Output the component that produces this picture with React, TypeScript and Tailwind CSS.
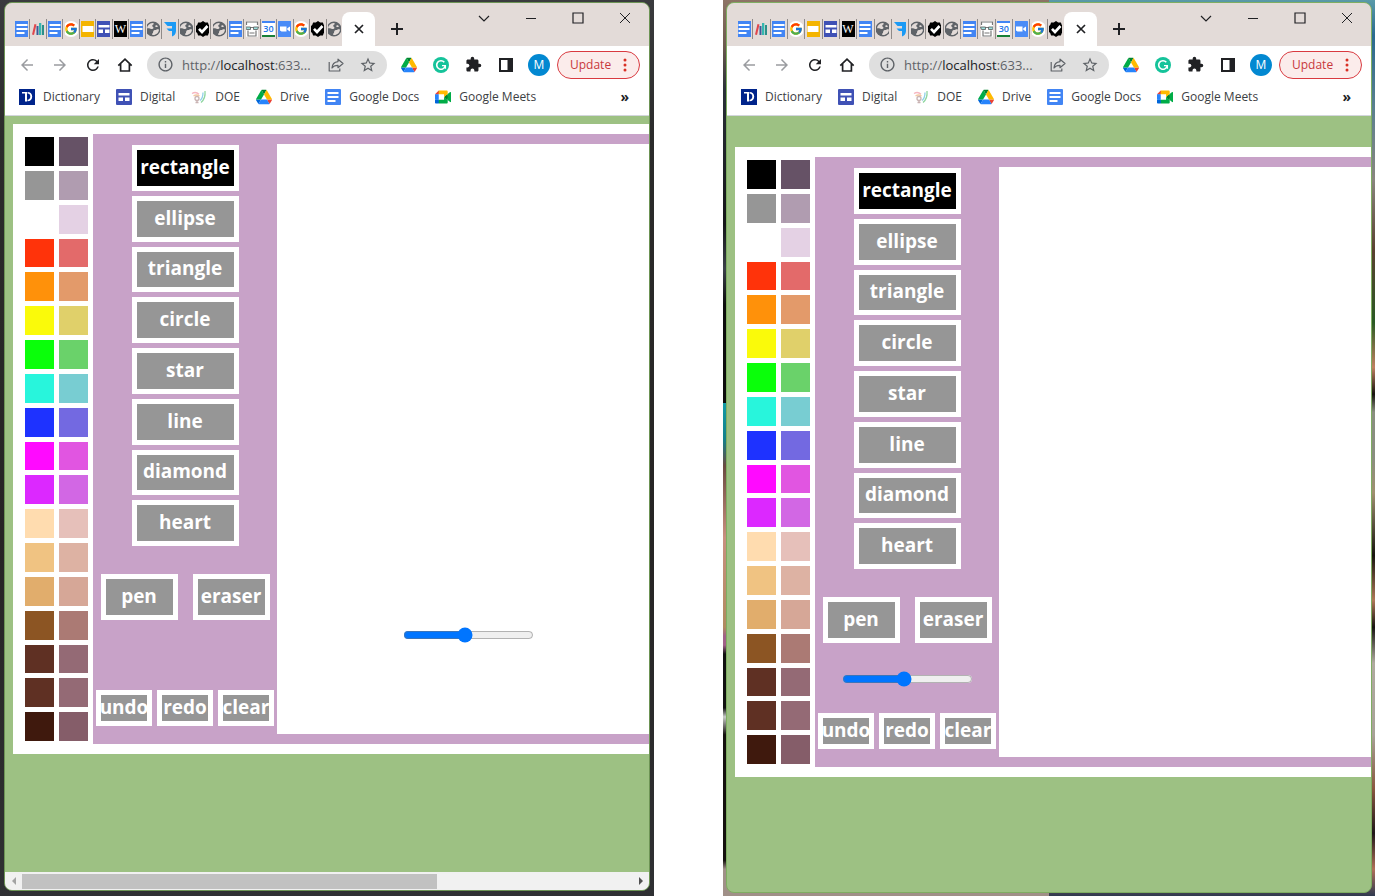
import type { ReactNode } from "react";
import { FcGoogle } from "react-icons/fc";
import {
  MdArrowBack,
  MdArrowForward,
  MdExtension,
  MdInfoOutline,
  MdRefresh,
  MdStarBorder,
} from "react-icons/md";

/* ---------- site icons ---------- */

const DocsIcon = () => (
  <svg viewBox="0 0 16 16" className="size-4 shrink-0" aria-hidden="true">
    <rect width="16" height="16" rx="1" fill="#4285f4" />
    <path d="M2.5 3h11v2h-11zM2.5 7h11v2h-11zM2.5 11h8v2h-8z" fill="#fff" />
  </svg>
);

const BooksIcon = () => (
  <svg viewBox="0 0 16 16" className="size-4 shrink-0" aria-hidden="true">
    <path d="M2 13.500 4.500 3l2 .5L4 14z" fill="#e0474c" />
    <path d="M6.500 5h2v9h-2z" fill="#3d5a98" />
    <path d="M9 2h2.300v12H9z" fill="#35b8b0" />
    <path d="M12 4h2v10h-2z" fill="#2b8f8a" />
  </svg>
);

const GoogleIcon = () => (
  <span className="flex size-4 shrink-0 items-center justify-center rounded-full bg-white">
    <FcGoogle className="size-3.5" />
  </span>
);

const SlidesIcon = () => (
  <svg viewBox="0 0 16 16" className="size-4 shrink-0" aria-hidden="true">
    <rect width="16" height="16" rx="1" fill="#f4b400" />
    <path d="M2.500 5h11v6h-11z" fill="#fff" />
  </svg>
);

const SitesIcon = () => (
  <svg viewBox="0 0 16 16" className="size-4 shrink-0" aria-hidden="true">
    <rect width="16" height="16" rx="1" fill="#3f51b5" />
    <path d="M2.500 4h11v2.500h-11zM2.500 8.500H7V12H2.500zM9 8.500h4.500V12H9z" fill="#fff" />
  </svg>
);

const WIcon = () => (
  <span className="flex size-4 shrink-0 items-center justify-center bg-black font-['Liberation_Serif',serif] text-xs leading-4 text-white">
    W
  </span>
);

const GlobeIcon = () => (
  <svg viewBox="0 0 16 16" className="size-4 shrink-0" aria-hidden="true">
    <circle cx="8" cy="8" r="7.500" fill="#5f6368" />
    <path
      d="M2 7.200C2.300 4.500 4.500 2.200 7.500 2c1.500 0 1.700 1 .8 1.600-1.500.7-1.200 1.900-.3 2.400 1 .7.400 1.900-.9 2.100-1.300.1-2-.8-3-.9-.8 0-1.300.2-2.100 0z"
      fill="#e3dbd8"
    />
    <path
      d="M14 8.800c-.3 2.900-2.700 5.200-5.800 5.300-1.200-.2-1.400-1.100-.6-1.900.9-.8.200-1.500.9-2.500.8-.9 1.900-.5 2.800-1 .9-.4 1.700-.7 2.700.1zM10.500 4.500c.9-.7 1.900 0 2.400.9-.7.8-2 .8-2.600.3z"
      fill="#e3dbd8"
    />
  </svg>
);

const FlagIcon = () => (
  <svg viewBox="0 0 16 16" className="size-4 shrink-0" aria-hidden="true">
    <path d="M2 1h12v9c0 3-2 5-4 5.500V10H7L4.500 7.500H10V5H5.500z" fill="#1a9af5" />
  </svg>
);

const CheckIcon = () => (
  <svg viewBox="0 0 16 16" className="size-4 shrink-0" aria-hidden="true">
    <path
      d="M8 0l2.200 1.500 2.700.1.900 2.500L16 5.800 15.200 8l.8 2.200-2.200 1.700-.9 2.500-2.700.1L8 16l-2.200-1.500-2.700-.1-.9-2.500L0 10.200.8 8 0 5.800l2.200-1.700.9-2.500 2.700-.1z"
      fill="#000"
    />
    <path d="M4 7.800 7 11l5.500-6" fill="none" stroke="#fff" strokeWidth="2.600" />
  </svg>
);

const GlassesIcon = () => (
  <svg viewBox="0 0 16 16" className="size-4 shrink-0" aria-hidden="true">
    <rect x="2" y="0" width="12" height="16" rx="1" fill="#fff" />
    <path d="M2.500 4V1h11v3M4 9.500V15h8V9.500M5.500 12h5" fill="none" stroke="#777" strokeWidth="1.200" />
    <path d="M1.500 6h5v2.500h-4zM9.500 6h5l-1 2.500h-4zM6.500 6.500h3" fill="#9de0dc" stroke="#555" strokeWidth="0.800" />
  </svg>
);

const CalendarIcon = () => (
  <span className="flex size-4 shrink-0 items-center justify-center border-b-2 border-t-2 border-b-[#188038] border-t-[#4285f4] bg-white font-['Open_Sans',sans-serif] text-[9px] font-semibold leading-3 text-[#1a73e8]">
    30
  </span>
);

const VideoIcon = () => (
  <svg viewBox="0 0 16 16" className="size-4 shrink-0" aria-hidden="true">
    <rect width="16" height="16" rx="2" fill="#4a8cf7" />
    <path d="M3 5.500h6.500v5H4.500L3 9.500zM10.300 7.200 13 5.500v5l-2.700-1.700z" fill="#fff" />
  </svg>
);

const DriveIcon = () => (
  <svg viewBox="0 0 87.3 78" className="size-4 shrink-0" aria-hidden="true">
    <path d="m6.600 66.850 3.850 6.650c.8 1.400 1.950 2.500 3.300 3.300l13.750-23.800h-27.500c0 1.550.4 3.100 1.200 4.500z" fill="#0066da" />
    <path d="m43.650 25-13.750-23.800c-1.350.8-2.500 1.900-3.300 3.300l-25.400 44a9.060 9.060 0 0 0-1.200 4.500h27.500z" fill="#00ac47" />
    <path d="m73.550 76.800c1.350-.8 2.500-1.900 3.300-3.300l1.600-2.750 7.650-13.250c.8-1.400 1.200-2.950 1.200-4.500h-27.502l5.852 11.500z" fill="#ea4335" />
    <path d="m43.650 25 13.750-23.800c-1.350-.8-2.900-1.200-4.500-1.200h-18.500c-1.600 0-3.150.45-4.500 1.200z" fill="#00832d" />
    <path d="m59.800 53h-32.300l-13.750 23.800c1.350.8 2.900 1.200 4.500 1.200h50.800c1.600 0 3.150-.45 4.500-1.200z" fill="#2684fc" />
    <path d="m73.400 26.500-12.700-22c-.8-1.400-1.950-2.500-3.300-3.300l-13.750 23.800 16.150 28h27.450c0-1.550-.4-3.100-1.200-4.500z" fill="#ffba00" />
  </svg>
);

const MeetIcon = () => (
  <svg viewBox="0 0 87.5 72" className="size-4 shrink-0" aria-hidden="true">
    <path fill="#fff" d="M20 20h30v32H20z" />
    <path fill="#00832d" d="M49.500 36l8.530 9.750 11.470 7.330 2-17.020-2-16.640-11.690 6.440z" />
    <path fill="#0066da" d="M0 51.500V66c0 3.315 2.685 6 6 6h14.500l3-10.960-3-9.540-9.950-3z" />
    <path fill="#e94235" d="M20.500 0L0 20.500l10.550 3 9.950-3 2.950-9.410z" />
    <path fill="#2684fc" d="M20.500 20.500H0v31h20.500z" />
    <path
      fill="#00ac47"
      d="M82.600 8.680L69.500 19.420v33.660l13.160 10.790c1.970 1.540 4.850.135 4.850-2.370V11c0-2.535-2.945-3.925-4.910-2.320zM49.500 36v15.500h-29V72h43c3.315 0 6-2.685 6-6V53.080z"
    />
    <path fill="#ffba00" d="M63.500 0h-43v20.500h29V36l20-16.570V6c0-3.315-2.685-6-6-6z" />
  </svg>
);

const DictionaryIcon = () => (
  <svg viewBox="0 0 16 16" className="size-4 shrink-0" aria-hidden="true">
    <rect width="16" height="16" fill="#00248b" />
    <path d="M3 3h5v9.500H6V4.500H3z" fill="#fff" />
    <path
      d="M8.500 3c3 0 4.700 1.700 4.700 4.600 0 3-1.800 4.700-4.700 4.700v-1.600c1.800 0 2.800-1.100 2.800-3.100S10.300 4.600 8.500 4.600z"
      fill="#fff"
    />
  </svg>
);

const DoeIcon = () => (
  <svg viewBox="0 0 16 16" className="size-4 shrink-0" fill="none" strokeWidth="1.300" aria-hidden="true">
    <path d="M1 4.500c2.500-1.500 5-1.200 7 .8" stroke="#f6b6c0" />
    <path d="M2.500 7c2-1.300 4-1.300 6 0" stroke="#f3c9a2" />
    <path d="M14 2c.5 5-1 9-4 11.500" stroke="#8fd6a0" />
    <path d="M12 3.500c0 4-1 6.500-3 8" stroke="#8fd0e8" />
    <circle cx="6" cy="9.500" r="2" stroke="#c9b3b3" />
    <path d="M6 11v2.500M4.500 13.500h3" stroke="#c9b3b3" />
  </svg>
);

/* ---------- toolbar icons ---------- */

const HomeIcon = () => (
  <svg viewBox="0 0 16 16" className="size-4" fill="none" stroke="#202124" strokeWidth="1.700" aria-hidden="true">
    <path d="M1.300 8.600 8 2.200l6.700 6.400M3.600 7v7h8.800V7" />
  </svg>
);

const ShareIcon = () => (
  <svg viewBox="0 0 16 16" className="size-4" fill="none" stroke="#5f6368" strokeWidth="1.200" strokeLinejoin="round" aria-hidden="true">
    <path d="M1.200 5v9h10.600v-2.500" />
    <path d="M10 2.200 15 6.500l-5 4.200V8.300C7.300 8.300 5.300 9 4 11c.2-3.400 2.300-6 6-6.400z" />
  </svg>
);

const GrammarlyIcon = () => (
  <svg viewBox="0 0 16 16" className="size-4" aria-hidden="true">
    <circle cx="8" cy="8" r="8" fill="#15c39a" />
    <path d="M11.300 5.200A4.300 4.300 0 1 0 12.200 9" fill="none" stroke="#fff" strokeWidth="1.600" />
    <path d="M9 8.700h3.400v3" fill="none" stroke="#fff" strokeWidth="1.300" />
  </svg>
);

const SidePanelIcon = () => (
  <svg viewBox="0 0 16 16" className="size-4" aria-hidden="true">
    <path d="M1 1h14v14H1zM3 3v10h6.500V3z" fill="#202124" fillRule="evenodd" />
  </svg>
);

/* ---------- data ---------- */

type Site = { name: string; icon: ReactNode };

const sites: Site[] = [
  { name: "Docs", icon: <DocsIcon /> },
  { name: "Books", icon: <BooksIcon /> },
  { name: "Docs", icon: <DocsIcon /> },
  { name: "Google", icon: <GoogleIcon /> },
  { name: "Slides", icon: <SlidesIcon /> },
  { name: "Digital", icon: <SitesIcon /> },
  { name: "Wiki", icon: <WIcon /> },
  { name: "Docs", icon: <DocsIcon /> },
  { name: "Page", icon: <GlobeIcon /> },
  { name: "Flag", icon: <FlagIcon /> },
  { name: "Page", icon: <GlobeIcon /> },
  { name: "Tasks", icon: <CheckIcon /> },
  { name: "Page", icon: <GlobeIcon /> },
  { name: "Docs", icon: <DocsIcon /> },
  { name: "Reader", icon: <GlassesIcon /> },
  { name: "Calendar", icon: <CalendarIcon /> },
  { name: "Video", icon: <VideoIcon /> },
  { name: "Google", icon: <GoogleIcon /> },
  { name: "Tasks", icon: <CheckIcon /> },
  { name: "Page", icon: <GlobeIcon /> },
];

const bookmarks: Site[] = [
  { name: "Dictionary", icon: <DictionaryIcon /> },
  { name: "Digital", icon: <SitesIcon /> },
  { name: "DOE", icon: <DoeIcon /> },
  { name: "Drive", icon: <DriveIcon /> },
  { name: "Google Docs", icon: <DocsIcon /> },
  { name: "Google Meets", icon: <MeetIcon /> },
];

const swatches = [
  "#000000", "#665266",
  "#969696", "#b09cb0",
  "#ffffff", "#e4d1e4",
  "#ff330a", "#e36a6a",
  "#ff910a", "#e39a6a",
  "#fafa0a", "#e0d06a",
  "#0aff0a", "#6ad26a",
  "#28f5dc", "#78cdd2",
  "#1e32ff", "#7369e1",
  "#ff0aff", "#e155e1",
  "#dc28ff", "#d267e4",
  "#ffdcaf", "#e6c0ba",
  "#f0c382", "#ddb2a3",
  "#e1ad6c", "#d6a797",
  "#8c5523", "#ab7a74",
  "#5f3023", "#946a75",
  "#5f3023", "#946a75",
  "#3f190d", "#855d69",
];

const shapes = ["rectangle", "ellipse", "triangle", "circle", "star", "line", "diamond", "heart"];

/* ---------- browser frame ---------- */

function TabStrip({ tabs }: { tabs: Site[] }) {
  return (
    <div className="flex h-[43px] shrink-0 items-end bg-[#e3dbd8] pl-[9px]">
      <div className="flex w-[328px] items-center pb-[7px]">
        {tabs.map((tab, i) => (
          <button
            key={i}
            aria-label={tab.name}
            className={`flex h-5 min-w-0 flex-1 items-center justify-center px-px ${
              i > 0 ? "border-l border-[#8f8a88]" : ""
            }`}
          >
            <span className="flex w-[13px] items-center justify-center overflow-hidden">{tab.icon}</span>
          </button>
        ))}
      </div>
      <button
        aria-label="Close tab"
        className="flex h-[34px] w-[33px] items-center justify-center rounded-t-lg bg-white"
      >
        <svg viewBox="0 0 10 10" className="size-2.5" stroke="#202124" strokeWidth="1.700" aria-hidden="true">
          <path d="M1 1l8 8M9 1L1 9" />
        </svg>
      </button>
      <button aria-label="New tab" className="mb-[11px] ml-4 flex size-3 items-center justify-center">
        <svg viewBox="0 0 12 12" className="size-3" stroke="#202124" strokeWidth="2" aria-hidden="true">
          <path d="M6 0v12M0 6h12" />
        </svg>
      </button>
      <div className="ml-auto flex items-start gap-[35px] self-start pr-[18px] pt-[9px]">
        <button aria-label="Search tabs">
          <svg viewBox="0 0 12 12" className="size-3" fill="none" stroke="#202124" strokeWidth="1.200" aria-hidden="true">
            <path d="M1 4l5 5 5-5" />
          </svg>
        </button>
        <button aria-label="Minimize">
          <svg viewBox="0 0 12 12" className="size-3" stroke="#202124" aria-hidden="true">
            <path d="M1 6.500h10" />
          </svg>
        </button>
        <button aria-label="Maximize">
          <svg viewBox="0 0 12 12" className="size-3" fill="none" stroke="#202124" strokeWidth="1.200" aria-hidden="true">
            <path d="M1 1h10v10H1z" />
          </svg>
        </button>
        <button aria-label="Close window">
          <svg viewBox="0 0 12 12" className="size-3" stroke="#202124" aria-hidden="true">
            <path d="M1 1l10 10M11 1L1 11" />
          </svg>
        </button>
      </div>
    </div>
  );
}

function Toolbar() {
  return (
    <div className="flex h-[37px] shrink-0 items-center bg-white pl-[13px] pr-[9px]">
      <div className="flex items-center gap-[15px]">
        <button aria-label="Back">
          <MdArrowBack className="size-[18px] text-[#9a9ca0]" />
        </button>
        <button aria-label="Forward">
          <MdArrowForward className="size-[18px] text-[#9a9ca0]" />
        </button>
        <button aria-label="Reload">
          <MdRefresh className="size-[18px] text-[#202124]" />
        </button>
        <button aria-label="Home">
          <HomeIcon />
        </button>
      </div>
      <div className="ml-[14px] flex h-7 min-w-0 flex-1 items-center rounded-full bg-[#dfdfdf] px-2.5">
        <MdInfoOutline className="size-[17px] shrink-0 text-[#5f6368]" />
        <a
          href="http://localhost:63342"
          className="ml-2 min-w-0 flex-1 whitespace-nowrap font-['Open_Sans',sans-serif] text-[13px] leading-5 text-[#5f6368]"
        >
          http://<span className="text-[#202124]">localhost</span>:633...
        </a>
        <button aria-label="Share">
          <ShareIcon />
        </button>
        <button aria-label="Bookmark page" className="ml-[15px]">
          <MdStarBorder className="size-[18px] text-[#5f6368]" />
        </button>
      </div>
      <div className="ml-[14px] flex items-center gap-4">
        <button aria-label="Drive">
          <DriveIcon />
        </button>
        <button aria-label="Grammarly">
          <GrammarlyIcon />
        </button>
        <button aria-label="Extensions">
          <MdExtension className="size-[17px] text-[#202124]" />
        </button>
        <button aria-label="Side panel">
          <SidePanelIcon />
        </button>
      </div>
      <button className="ml-[14px] flex size-[22px] items-center justify-center rounded-full bg-[#0288d1] font-['Open_Sans',sans-serif] text-xs text-white">
        M
      </button>
      <button className="ml-[7px] flex h-7 w-[83px] items-center justify-between rounded-full border border-[#d93a40] bg-[#fbeceb] pl-3 pr-3 font-['Open_Sans',sans-serif] text-xs text-[#c8383c]">
        Update
        <svg viewBox="0 0 4 14" className="h-3.5 w-1" fill="#d93025" aria-hidden="true">
          <circle cx="2" cy="2" r="1.500" />
          <circle cx="2" cy="7" r="1.500" />
          <circle cx="2" cy="12" r="1.500" />
        </svg>
      </button>
    </div>
  );
}

function Bookmarks() {
  return (
    <nav className="flex h-[33px] shrink-0 items-center gap-4 border-b border-[#d3d6dc] bg-white pb-1 pl-3.5 pr-5 font-['Open_Sans',sans-serif] text-xs leading-4 text-[#3c4043]">
      {bookmarks.map((b) => (
        <a key={b.name} href="#" className="flex items-center gap-2 whitespace-nowrap">
          {b.icon}
          {b.name}
        </a>
      ))}
      <button aria-label="More bookmarks" className="ml-auto text-sm font-bold leading-4 text-[#202124]">
        »
      </button>
    </nav>
  );
}

/* ---------- painting app ---------- */

function Tool({ label, selected = false, className }: { label: string; selected?: boolean; className: string }) {
  return (
    <button
      className={`flex min-w-0 items-center justify-center border-[5px] border-white text-[19px] leading-6 font-bold text-white ${
        selected ? "bg-black" : "bg-[#969696]"
      } ${className}`}
    >
      <span className="pb-0.5">{label}</span>
    </button>
  );
}

function SizeSlider({ id }: { id: string }) {
  return (
    <input id={id} aria-label="Brush size" type="range" defaultValue={47} className="block h-4 w-[131px]" />
  );
}

function Painter({ sliderOnCanvas, id }: { sliderOnCanvas: boolean; id: string }) {
  return (
    <div className="ml-2 flex h-[630px] shrink-0 border-y-[10px] border-l-[10px] border-white bg-white font-['Open_Sans','Noto_Sans',sans-serif]">
      <div className="grid shrink-0 auto-rows-fr grid-cols-[29px_29px] gap-[5px] py-[3px] pl-0.5 pr-[5px]">
        {swatches.map((color, i) => (
          <button key={i} aria-label={`Color ${color}`} style={{ backgroundColor: color }} />
        ))}
      </div>
      <div className="flex min-w-0 flex-1 border-y-[10px] border-[#c8a2c8] bg-[#c8a2c8]">
        <div className="flex w-[184px] shrink-0 flex-col items-center pt-px pb-2">
          <div className="grid h-[401px] w-[107px] auto-rows-fr gap-[5px]">
            {shapes.map((shape, i) => (
              <Tool key={shape} label={shape} selected={i === 0} className="w-full" />
            ))}
          </div>
          <div className="mt-7 flex gap-[15px]">
            <Tool label="pen" className="h-[46px] w-[77px]" />
            <Tool label="eraser" className="h-[46px] w-[77px]" />
          </div>
          {!sliderOnCanvas && (
            <div className="mt-7">
              <SizeSlider id={id} />
            </div>
          )}
          <div className="mt-auto flex gap-[5px]">
            <Tool label="undo" className="h-9 w-14" />
            <Tool label="redo" className="h-9 w-14" />
            <Tool label="clear" className="h-9 w-14" />
          </div>
        </div>
        <div className="relative min-w-0 flex-1 bg-white">
          {sliderOnCanvas && (
            <div className="absolute left-[126px] top-[483px]">
              <SizeSlider id={id} />
            </div>
          )}
        </div>
      </div>
    </div>
  );
}

function HorizontalScrollbar() {
  return (
    <div className="flex h-[18px] shrink-0 items-center justify-between bg-[#f1f1f1]">
      <button aria-label="Scroll left" className="flex w-[17px] justify-center">
        <svg viewBox="0 0 8 8" className="size-2" aria-hidden="true">
          <path d="M6 0v8L2 4z" fill="#a3a3a3" />
        </svg>
      </button>
      <div className="flex h-[15px] flex-1">
        <div className="w-[68%] bg-[#c1c1c1]" />
      </div>
      <button aria-label="Scroll right" className="flex w-[17px] justify-center">
        <svg viewBox="0 0 8 8" className="size-2" aria-hidden="true">
          <path d="M2 0v8l4-4z" fill="#505050" />
        </svg>
      </button>
    </div>
  );
}

export default function App() {
  return (
    <main className="flex min-h-screen gap-[69px] bg-white">
      <section className="flex min-w-0 flex-1 bg-[linear-gradient(#3a3b3e,#2b2b2b_15%,#262424_60%,#2f3033)] pt-0.5 pr-1 pb-[5px] pl-1">
        <div className="flex min-w-0 flex-1 flex-col overflow-hidden rounded-lg border border-[#6d9455] bg-[#9dc183]">
          <TabStrip tabs={sites} />
          <Toolbar />
          <Bookmarks />
          <div className="flex flex-1 flex-col pt-2">
            <Painter sliderOnCanvas id="size-left" />
          </div>
          <HorizontalScrollbar />
        </div>
      </section>
      <section className="flex min-w-0 flex-1 pt-0.5 pr-[3px] pb-[3px] pl-[3px] [background:linear-gradient(#8d7466,#6d5a4e_5%,#2a3038_10%,#141518_25%,#3a4048_30%,#0c0c0c_34%,#0c0c0c_45%,#129aa5_45%,#12808a_49%,#6a4a40_52%,#c98f80_60%,#b08a60_70%,#a06088_71%,#a06088_72%,#101010_73%,#101010_79%,#c8ccc8_80%,#14100e_82%,#14100e_96%,#a09088_97%)_left/50%_100%_no-repeat,linear-gradient(#5a9aa8,#2a6a90_4%,#5a8090_12%,#8a8680_20%,#5a4030_28%,#2a5a24_36%,#c08060_41%,#181410_44%,#8a8e80_46%,#8a8e80_51%,#a09070_55%,#18140f_62%,#b07858_67%,#181412_70%,#b0aaa0_74%,#a8a298_82%,#8a5840_88%,#20181a_93%,#b07058_97%,#303a50)]">
        <div className="flex min-w-0 flex-1 flex-col overflow-hidden rounded-lg border border-[#7fae62] bg-[#9dc183]">
          <TabStrip tabs={sites.slice(0, 19)} />
          <Toolbar />
          <Bookmarks />
          <div className="flex flex-1 flex-col pt-[31px]">
            <Painter sliderOnCanvas={false} id="size-right" />
          </div>
        </div>
      </section>
    </main>
  );
}
